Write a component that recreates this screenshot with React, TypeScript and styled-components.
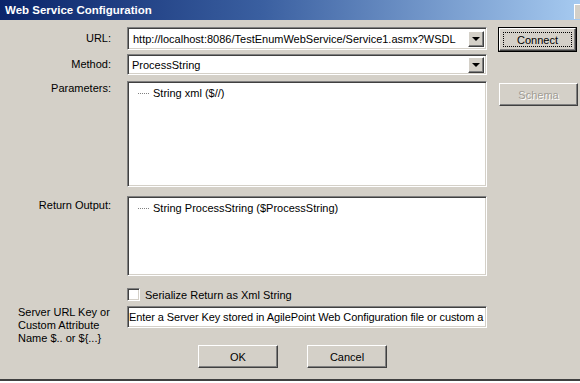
import styled, { createGlobalStyle, css } from "styled-components";

const GlobalStyle = createGlobalStyle`
  html, body {
    margin: 0;
    padding: 0;
    background: #ffffff;
  }
  body {
    font-family: Tahoma, "Liberation Sans", Arial, sans-serif;
    font-size: 11px;
    color: #000;
  }
`;

const sunken = css`
  border-top: 1px solid #808080;
  border-left: 1px solid #808080;
  border-bottom: 1px solid #ffffff;
  border-right: 1px solid #ffffff;
  box-shadow: inset 1px 1px 0 #404040, inset -1px -1px 0 #d4d0c8;
`;

const raised = css`
  border-top: 1px solid #ffffff;
  border-left: 1px solid #ffffff;
  border-bottom: 1px solid #404040;
  border-right: 1px solid #404040;
  box-shadow: inset -1px -1px 0 #808080;
  background: #d4d0c8;
`;

const Window = styled.div`
  width: 580px;
  height: 381px;
  background: #d4d0c8;
  border-bottom: 2px solid #404040;
  box-sizing: border-box;
  display: flex;
  flex-direction: column;
  overflow: hidden;
`;

const TitleBar = styled.div`
  height: 20px;
  flex: none;
  background: linear-gradient(to right, #0a246a, #3a5fa0 45%, #a6caf0);
  display: flex;
  align-items: center;
  justify-content: space-between;
  padding-left: 5px;
`;

const Title = styled.span`
  color: #ffffff;
  font-weight: bold;
  font-size: 11.5px;
`;

const CloseBox = styled.div`
  width: 5px;
  height: 14px;
  background: #d4d0c8;
  border-top: 1px solid #ffffff;
  border-left: 1px solid #ffffff;
  margin-top: 2px;
`;

const Body = styled.div`
  flex: 1;
  display: flex;
  padding: 7px 0 0 0;
`;

const Form = styled.div`
  width: 487px;
  display: grid;
  grid-template-columns: 111px 360px;
  column-gap: 16px;
  align-content: start;
`;

const Label = styled.div<{ $top?: number; $left?: boolean }>`
  text-align: ${(p) => (p.$left ? "left" : "right")};
  padding-left: ${(p) => (p.$left ? "18px" : "0")};
  white-space: ${(p) => (p.$left ? "normal" : "nowrap")};
  width: ${(p) => (p.$left ? "100px" : "auto")};
  padding-top: ${(p) => p.$top ?? 4}px;
  color: #000;
  line-height: 13px;
`;

const Cell = styled.div<{ $mt?: number; $h?: number }>`
  margin-top: ${(p) => p.$mt ?? 0}px;
  height: ${(p) => (p.$h ? `${p.$h}px` : "auto")};
`;

const LabelCell = styled(Cell)`
  display: flex;
  justify-content: flex-end;
`;

const Combo = styled.div<{ $h: number }>`
  ${sunken};
  background: #ffffff;
  height: ${(p) => p.$h}px;
  box-sizing: border-box;
  display: flex;
  align-items: center;
  padding: 2px 2px 2px 4px;
`;

const ComboText = styled.span<{ $pad?: number }>`
  flex: 1;
  padding-left: ${(p) => p.$pad ?? 0}px;
  white-space: nowrap;
  overflow: hidden;
`;

const DropButton = styled.div`
  ${raised};
  width: 16px;
  height: 16px;
  box-sizing: border-box;
  display: flex;
  align-items: center;
  justify-content: center;
`;

const Arrow = styled.div`
  width: 0;
  height: 0;
  border-left: 4px solid transparent;
  border-right: 4px solid transparent;
  border-top: 4px solid #000;
  margin-top: 1px;
`;

const ListBox = styled.div<{ $h: number }>`
  ${sunken};
  background: #ffffff;
  height: ${(p) => p.$h}px;
  box-sizing: border-box;
  padding: 5px 0 0 10px;
`;

const TreeItem = styled.div`
  display: flex;
  align-items: center;
  white-space: nowrap;
`;

const TreeLine = styled.span`
  width: 11px;
  margin-right: 4px;
  border-top: 1px dotted #808080;
  margin-top: 1px;
`;

const CheckRow = styled.label`
  display: flex;
  align-items: center;
  gap: 5px;
`;

const CheckBox = styled.span`
  ${sunken};
  width: 13px;
  height: 13px;
  box-sizing: border-box;
  background: #ffffff;
`;

const TextInput = styled.div`
  ${sunken};
  background: #ffffff;
  height: 22px;
  box-sizing: border-box;
  display: flex;
  align-items: center;
  padding: 0 1px;
  white-space: nowrap;
  overflow: hidden;
  letter-spacing: -0.1px;
`;

const ButtonRow = styled.div`
  grid-column: 2;
  display: flex;
  gap: 29px;
  margin-top: 17px;
  padding-left: 71px;
`;

const Button = styled.div<{ $disabled?: boolean }>`
  ${raised};
  width: 80px;
  height: 23px;
  box-sizing: border-box;
  display: flex;
  align-items: center;
  justify-content: center;
  color: ${(p) => (p.$disabled ? "#a09c94" : "#000")};
  text-shadow: ${(p) => (p.$disabled ? "1px 1px 0 #ffffff" : "none")};
`;

const DefaultButton = styled.div`
  border: 1px solid #000;
  width: 79px;
  height: 25px;
  box-sizing: border-box;
`;

const DefaultInner = styled(Button)`
  width: 77px;
  height: 23px;
  padding: 3px;
`;

const FocusRing = styled.div`
  width: 100%;
  height: 100%;
  border: 1px dotted #000;
  box-sizing: border-box;
  display: flex;
  align-items: center;
  justify-content: center;
`;

const SideColumn = styled.div`
  padding-left: 11px;
  display: flex;
  flex-direction: column;
  align-items: flex-start;
  gap: 31px;
`;

const SchemaButton = styled(Button)`
  margin-left: 1px;
  width: 79px;
`;

export default function App() {
  return (
    <>
      <GlobalStyle />
      <Window>
        <TitleBar>
          <Title>Web Service Configuration</Title>
          <CloseBox />
        </TitleBar>
        <Body>
          <Form>
            <LabelCell>
              <Label $top={5}>URL:</Label>
            </LabelCell>
            <Cell>
              <Combo $h={23}>
                <ComboText $pad={1}>
                  http://localhost:8086/TestEnumWebService/Service1.asmx?WSDL
                </ComboText>
                <DropButton>
                  <Arrow />
                </DropButton>
              </Combo>
            </Cell>

            <LabelCell $mt={4}>
              <Label $top={4}>Method:</Label>
            </LabelCell>
            <Cell $mt={4}>
              <Combo $h={21}>
                <ComboText $pad={-2}>ProcessString</ComboText>
                <DropButton>
                  <Arrow />
                </DropButton>
              </Combo>
            </Cell>

            <LabelCell $mt={6}>
              <Label $top={1}>Parameters:</Label>
            </LabelCell>
            <Cell $mt={6}>
              <ListBox $h={106}>
                <TreeItem>
                  <TreeLine />
                  String xml ($//)
                </TreeItem>
              </ListBox>
            </Cell>

            <LabelCell $mt={9}>
              <Label $top={3}>Return Output:</Label>
            </LabelCell>
            <Cell $mt={9}>
              <ListBox $h={80}>
                <TreeItem>
                  <TreeLine />
                  String ProcessString ($ProcessString)
                </TreeItem>
              </ListBox>
            </Cell>

            <Cell $mt={12} />
            <Cell $mt={12}>
              <CheckRow>
                <CheckBox />
                Serialize Return as Xml String
              </CheckRow>
            </Cell>

            <Cell $mt={4} $h={22}>
              <Label $left $top={1}>
                Server URL Key or Custom Attribute Name $.. or ${"{...}"}
              </Label>
            </Cell>
            <Cell $mt={5}>
              <TextInput>
                Enter a Server Key stored in AgilePoint Web Configuration file or custom a
              </TextInput>
            </Cell>

            <Cell />
            <ButtonRow>
              <Button>OK</Button>
              <Button>Cancel</Button>
            </ButtonRow>
          </Form>
          <SideColumn>
            <DefaultButton>
              <DefaultInner>
                <FocusRing>Connect</FocusRing>
              </DefaultInner>
            </DefaultButton>
            <SchemaButton $disabled>Schema</SchemaButton>
          </SideColumn>
        </Body>
      </Window>
    </>
  );
}
